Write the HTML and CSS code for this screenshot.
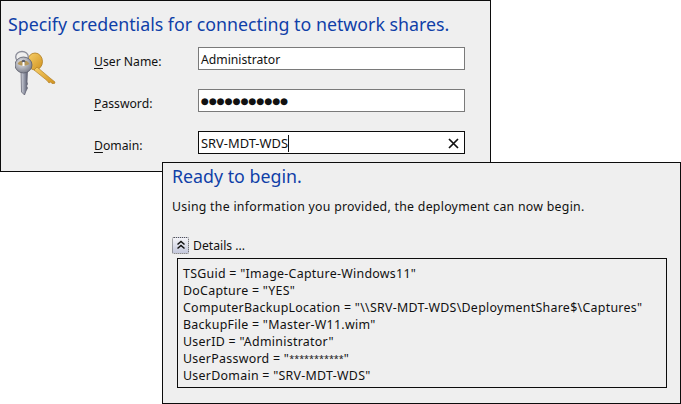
FILE: index.html
```html
<!DOCTYPE html>
<html lang="en">
<head>
<meta charset="utf-8">
<title>Deployment wizard</title>
<link rel="stylesheet" href="styles.css">
</head>
<body>
<section class="window creds">
  <h1 class="title">Specify credentials for connecting to network shares.</h1>
  <div class="creds-body">
    <svg class="keys" width="44" height="48" viewBox="0 0 44 48">
      <defs>
        <linearGradient id="gold" x1="0" y1="0" x2="1" y2="1"><stop offset="0" stop-color="#f8d06a"/><stop offset="1" stop-color="#d0921f"/></linearGradient>
        <linearGradient id="steel" x1="0" y1="0" x2="1" y2="0"><stop offset="0" stop-color="#d5d7de"/><stop offset="0.55" stop-color="#8f93a3"/><stop offset="1" stop-color="#5f6272"/></linearGradient>
        <radialGradient id="bow" cx="0.4" cy="0.35" r="0.75"><stop offset="0" stop-color="#e8e9ee"/><stop offset="1" stop-color="#70737f"/></radialGradient>
      </defs>
      <ellipse cx="20" cy="11.5" rx="7.5" ry="8.5" fill="url(#gold)" stroke="#b07c1e" stroke-width="0.8"/>
      <path d="M22 17 L35 28 L40 32 L39.5 33.5 L37 33.5 L35.5 32 L34 33 L32 30.5 L19 20 Z" fill="url(#gold)" stroke="#a9761c" stroke-width="0.6"/>
      <ellipse cx="7" cy="7" rx="6.3" ry="5.5" fill="none" stroke="#8b8d99" stroke-width="1.3"/>
      <path d="M6 20 L12.5 20 L12 32 L12.5 34 L11.5 36 L12.5 38 L11 41 L9.5 45 L6.5 42 Z" fill="url(#steel)" stroke="#565868" stroke-width="0.7"/>
      <ellipse cx="8.5" cy="15" rx="8.5" ry="8" fill="url(#bow)" stroke="#5c5e6c" stroke-width="0.8"/>
      <path d="M2.5 14 A6.5 5.5 0 0 1 14.5 14 L11 15.5 H6 Z" fill="#b5975a"/>
      <circle cx="8.5" cy="11.5" r="1.8" fill="#5d5f6c"/>
      <rect x="7.5" y="12" width="2" height="4" fill="#fff"/>
    </svg>
    <div class="fields">
      <div class="field">
        <label class="label"><span class="ul">U</span>ser Name:</label>
        <div class="input"><span>Administrator</span></div>
      </div>
      <div class="field">
        <label class="label"><span class="ul">P</span>assword:</label>
        <div class="input"><span class="dots">●●●●●●●●●●●</span></div>
      </div>
      <div class="field">
        <label class="label"><span class="ul">D</span>omain:</label>
        <div class="input active"><span class="caret">SRV-MDT-WDS</span>
          <svg class="clear" width="11" height="11" viewBox="0 0 11 11"><path d="M1 1 L10 10 M10 1 L1 10" stroke="#111" stroke-width="1.7" fill="none"/></svg>
        </div>
      </div>
    </div>
  </div>
</section>

<section class="window ready">
  <h2 class="title">Ready to begin.</h2>
  <p class="intro">Using the information you provided, the deployment can now begin.</p>
  <div class="toggle">
    <span class="chev">
      <svg width="10" height="10" viewBox="0 0 10 10"><path d="M1.5 4.5 L5 1.5 L8.5 4.5 M1.5 8.5 L5 5.5 L8.5 8.5" stroke="#111" stroke-width="1.5" fill="none"/></svg>
    </span>
    <span>Details ...</span>
  </div>
  <div class="details">
    <div>TSGuid = "Image-Capture-Windows11"</div>
    <div>DoCapture = "YES"</div>
    <div>ComputerBackupLocation = "\\SRV-MDT-WDS\DeploymentShare$\Captures"</div>
    <div>BackupFile = "Master-W11.wim"</div>
    <div>UserID = "Administrator"</div>
    <div>UserPassword = "<span class="stars">***********</span>"</div>
    <div>UserDomain = "SRV-MDT-WDS"</div>
  </div>
</section>
</body>
</html>
```
FILE: styles.css
```css
* { box-sizing: border-box; }
html, body { margin: 0; padding: 0; }
body {
  width: 681px;
  height: 404px;
  position: relative;
  overflow: hidden;
  background: #fff;
  font-family: "Noto Sans", "Open Sans", sans-serif;
  font-size: 12.2px;
  color: #111;
}
.window {
  position: absolute;
  background: #efefef;
  border: 1px solid #0c0c0c;
}
.creds { left: 0; top: 0; width: 491px; height: 172px; padding: 11px 0 0 7px; }
.ready { left: 162px; top: 162px; width: 519px; height: 242px; padding: 1px 14px 0 9px; }
.title {
  margin: 0;
  font-weight: 400;
  font-size: 17.8px;
  line-height: 24px;
  color: #0f3fa8;
  white-space: nowrap;
}
.creds-body { display: flex; margin-top: 11px; }
.keys { flex: none; margin: 3px 0 0 7px; }
.fields { margin-left: 35px; display: flex; flex-direction: column; gap: 19px; }
.field { display: flex; align-items: center; height: 23px; }
.label { width: 104px; position: relative; top: 3px; }
.ul { text-decoration: underline; text-underline-offset: 2px; }
.input {
  width: 267px;
  height: 23px;
  background: #fff;
  border: 1px solid #7a7a7a;
  display: flex;
  align-items: center;
  justify-content: space-between;
  padding: 1px 5px 0 2px;
}
.input.active { border-color: #0c0c0c; }
.caret { border-right: 1px solid #111; line-height: 17px; font-size: 12.9px; }
.dots { font-size: 9.1px; font-family: "DejaVu Sans", sans-serif; }
.intro { margin: 10px 0 0; line-height: 18px; white-space: nowrap; font-size: 12.3px; letter-spacing: 0.28px; }
.toggle { display: flex; align-items: center; gap: 4px; margin-top: 20px; height: 18px; }
.chev {
  width: 17px;
  height: 17px;
  display: flex;
  align-items: center;
  justify-content: center;
  border: 1px dotted #555;
  background: linear-gradient(#f4f4f8, #c4c8dc);
  border-radius: 2px;
}
.details {
  margin: 4px 0 0 5px;
  width: 490px;
  height: 130px;
  border: 1px solid #0c0c0c;
  padding: 6px 0 0 5px;
  line-height: 17px;
  white-space: nowrap;
  font-size: 12.4px;
  letter-spacing: 0.28px;
}
.stars { font-size: 9px; vertical-align: 1px; letter-spacing: 0; }
```
